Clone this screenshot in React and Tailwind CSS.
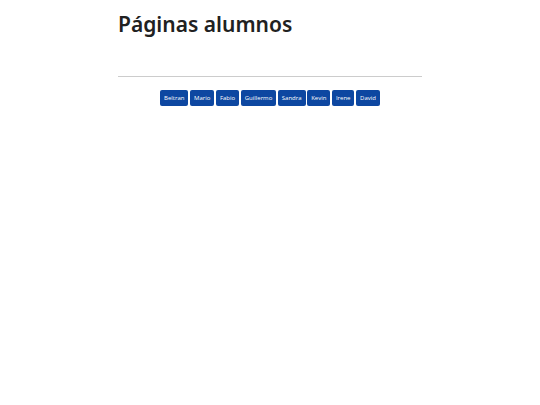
import { Fragment } from 'react';

const students = [
  'Beltran',
  'Mario',
  'Fabio',
  'Guillermo',
  'Sandra',
  'Kevin',
  'Irene',
  'David',
];

export default function App() {
  return (
    <main className="mx-auto max-w-76 pt-3 font-['Open_Sans','Noto_Sans',sans-serif] text-[#212121]">
      <h1 className="font-['Noto_Sans',sans-serif] text-[21px] leading-6 font-semibold">
        Páginas alumnos
      </h1>
      <hr className="mt-10 border-[#cccccc]" />
      <nav className="mt-3 pt-px text-center text-[6px] leading-2">
        {students.map((name) => (
          <Fragment key={name}>
            <a
              href={`#${name.toLowerCase()}`}
              className="inline-block rounded-xs bg-[#0d47a1] p-1 text-white hover:bg-[#1565c0]"
            >
              {name}
            </a>{' '}
          </Fragment>
        ))}
      </nav>
    </main>
  );
}
